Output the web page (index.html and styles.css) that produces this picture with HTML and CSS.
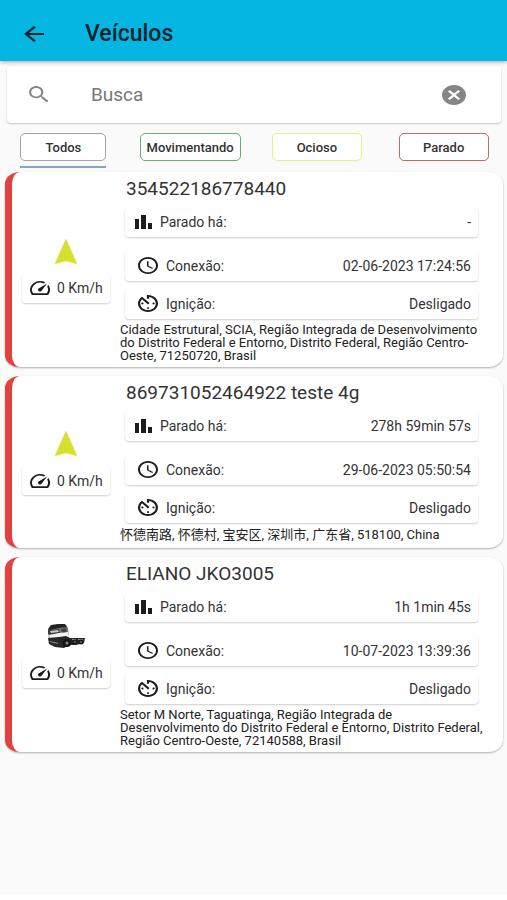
FILE: index.html
```html
<!DOCTYPE html>
<html lang="pt-BR">
<head>
<meta charset="utf-8">
<meta name="viewport" content="width=device-width, initial-scale=1">
<title>Veículos</title>
<link rel="stylesheet" href="styles.css">
</head>
<body>
<svg class="sprite" aria-hidden="true">
  <symbol id="speed" viewBox="2 4 20 16" preserveAspectRatio="none"><path d="M20.38 8.57l-1.23 1.85a8 8 0 0 1-.22 7.58H5.07A8 8 0 0 1 15.58 6.85l1.85-1.23A10 10 0 0 0 3.35 19a2 2 0 0 0 1.72 1h13.85a2 2 0 0 0 1.74-1 10 10 0 0 0-.27-10.44zm-9.79 6.84a2 2 0 0 0 2.83 0l5.66-8.49-8.49 5.66a2 2 0 0 0 0 2.83z"/></symbol>
  <symbol id="bars" viewBox="0 0 17 14"><path d="M0 4h4v10H0zM6 0h5v14H6zM13 8h4v6h-4z"/></symbol>
  <symbol id="clock" viewBox="2 2 20 20" preserveAspectRatio="none"><path d="M11.990 2C6.470 2 2 6.480 2 12s4.470 10 9.990 10C17.520 22 22 17.520 22 12S17.520 2 11.990 2zM12 20c-4.420 0-8-3.580-8-8s3.580-8 8-8 8 3.580 8 8-3.580 8-8 8zm.5-13H11v6l5.250 3.150.75-1.230-4.500-2.670z"/></symbol>
  <symbol id="ignition" viewBox="3 3 18 18" preserveAspectRatio="none"><path d="M11 17c0 .55.45 1 1 1s1-.45 1-1-.45-1-1-1-1 .45-1 1zm0-14v4h2V5.080c3.390.49 6 3.390 6 6.920 0 3.870-3.130 7-7 7s-7-3.130-7-7c0-1.680.59-3.220 1.580-4.420L12 13l1.410-1.410-6.800-6.800v.02C4.420 6.450 3 9.050 3 12c0 4.970 4.020 9 9 9 4.970 0 9-4.030 9-9s-4.030-9-9-9h-1zm7 9c0-.55-.45-1-1-1s-1 .45-1 1 .45 1 1 1 1-.45 1-1zM6 12c0 .55.45 1 1 1s1-.45 1-1-.45-1-1-1-1 .45-1 1z"/></symbol>
  <symbol id="arrow" viewBox="0 0 26 28" preserveAspectRatio="none"><path d="M13 1l12 26L13 23.500 1 27z"/></symbol>
</svg>

<header class="appbar">
  <button class="back" type="button" aria-label="Voltar">
    <svg viewBox="4 4 16 16" preserveAspectRatio="none"><path d="M20 11H7.830l5.590-5.590L12 4l-8 8 8 8 1.410-1.410L7.830 13H20v-2z"/></svg>
  </button>
  <h1>Veículos</h1>
</header>

<main>
  <form class="search">
    <label for="q" aria-label="Busca"><svg class="lens" viewBox="3 3 18 18" preserveAspectRatio="none"><path d="M15.500 14h-.79l-.28-.27A6.470 6.470 0 0 0 16 9.500 6.500 6.500 0 1 0 9.500 16c1.610 0 3.090-.59 4.230-1.570l.27.28v.79l5 4.990L20.490 19l-4.990-5zm-6 0C7.010 14 5 11.990 5 9.500S7.010 5 9.500 5 14 7.010 14 9.500 11.990 14 9.500 14z"/></svg></label>
    <input id="q" type="text" placeholder="Busca">
    <button class="clear" type="reset" aria-label="Limpar"><svg viewBox="2 2 20 20" preserveAspectRatio="none"><path d="M12 2C6.470 2 2 6.470 2 12s4.470 10 10 10 10-4.470 10-10S17.530 2 12 2zm5 13.590L15.590 17 12 13.410 8.410 17 7 15.590 10.590 12 7 8.410 8.410 7 12 10.590 15.590 7 17 8.410 13.410 12 17 15.590z"/></svg></button>
  </form>

  <nav class="filters">
    <div class="tab tab-active"><button class="chip chip-all" type="button">Todos</button></div>
    <div class="tab"><button class="chip chip-moving" type="button">Movimentando</button></div>
    <div class="tab"><button class="chip chip-idle" type="button">Ocioso</button></div>
    <div class="tab"><button class="chip chip-stopped" type="button">Parado</button></div>
  </nav>

  <section class="list">
    <article class="card">
      <div class="side">
        <svg class="marker"><use href="#arrow"/></svg>
        <p class="speed"><svg><use href="#speed"/></svg>0 Km/h</p>
      </div>
      <div class="info">
        <h2>354522186778440</h2>
        <dl>
          <div class="row row-first"><dt><svg class="i-bars"><use href="#bars"/></svg>Parado há:</dt><dd>-</dd></div>
          <div class="row"><dt><svg class="i-round"><use href="#clock"/></svg>Conexão:</dt><dd>02-06-2023 17:24:56</dd></div>
          <div class="row"><dt><svg class="i-round"><use href="#ignition"/></svg>Ignição:</dt><dd>Desligado</dd></div>
        </dl>
        <p class="address">Cidade Estrutural, SCIA, Região Integrada de Desenvolvimento do Distrito Federal e Entorno, Distrito Federal, Região Centro-Oeste, 71250720, Brasil</p>
      </div>
    </article>

    <article class="card">
      <div class="side">
        <svg class="marker"><use href="#arrow"/></svg>
        <p class="speed"><svg><use href="#speed"/></svg>0 Km/h</p>
      </div>
      <div class="info">
        <h2>869731052464922 teste 4g</h2>
        <dl>
          <div class="row row-first"><dt><svg class="i-bars"><use href="#bars"/></svg>Parado há:</dt><dd>278h 59min 57s</dd></div>
          <div class="row"><dt><svg class="i-round"><use href="#clock"/></svg>Conexão:</dt><dd>29-06-2023 05:50:54</dd></div>
          <div class="row"><dt><svg class="i-round"><use href="#ignition"/></svg>Ignição:</dt><dd>Desligado</dd></div>
        </dl>
        <p class="address address-cjk">怀德南路, 怀德村, 宝安区, 深圳市, 广东省, 518100, China</p>
      </div>
    </article>

    <article class="card">
      <div class="side">
        <svg class="truck" viewBox="0 0 38 27">
          <path fill="#777" d="M1 7l3-4 6-1h9l2 3 1 11H2z"/>
          <path fill="#222" d="M1 6l3-4 7-1h7l2 3-8 1-9 2z"/>
          <path fill="#3a3a3a" d="M1 6l2 1 9-1 1 4-10 2-2-1z"/>
          <path fill="#c9c9c9" d="M3 8l8-1 1 2-8 1z"/>
          <path fill="#444" d="M14 6l5-1 1 5-5 1z"/>
          <path fill="#f2f2f2" d="M2 12l10-2 9-1 1 5-9 1-10 1z"/>
          <path fill="#272727" d="M1 15l11-1 7-1 4 2h15l-1 5-8 2h-7l-5 3-9-1-6-3z"/>
          <path fill="#8c8c8c" d="M3 18l8 2v1l-8-2zM25 16h4v1h-4zM31 16h5v1h-5z"/>
          <circle cx="20" cy="20" r="4" fill="#161616"/><circle cx="20" cy="20" r="1.500" fill="#8a8a8a"/>
          <circle cx="28" cy="19" r="2.500" fill="#1c1c1c"/><circle cx="28" cy="19" r="1" fill="#666"/>
          <circle cx="34" cy="19" r="2.500" fill="#1c1c1c"/><circle cx="34" cy="19" r="1" fill="#666"/>
        </svg>
        <p class="speed"><svg><use href="#speed"/></svg>0 Km/h</p>
      </div>
      <div class="info">
        <h2>ELIANO JKO3005</h2>
        <dl>
          <div class="row row-first"><dt><svg class="i-bars"><use href="#bars"/></svg>Parado há:</dt><dd>1h 1min 45s</dd></div>
          <div class="row"><dt><svg class="i-round"><use href="#clock"/></svg>Conexão:</dt><dd>10-07-2023 13:39:36</dd></div>
          <div class="row"><dt><svg class="i-round"><use href="#ignition"/></svg>Ignição:</dt><dd>Desligado</dd></div>
        </dl>
        <p class="address">Setor M Norte, Taguatinga, Região Integrada de Desenvolvimento do Distrito Federal e Entorno, Distrito Federal, Região Centro-Oeste, 72140588, Brasil</p>
      </div>
    </article>
  </section>
</main>
<footer class="navbar"></footer>
</body>
</html>
```
FILE: styles.css
```css
* { box-sizing: border-box; }

body {
  margin: 0;
  min-height: 100vh;
  display: flex;
  flex-direction: column;
  background: #fafafa;
  color: #333;
  font-family: Roboto, "Noto Sans CJK SC", sans-serif;
  font-size: 14px;
}

h1, h2, p, dl, dd { margin: 0; }
button { font: inherit; color: inherit; padding: 0; border: 0; background: none; }
svg { display: block; fill: currentColor; }
.sprite { position: absolute; width: 0; height: 0; }

.appbar {
  display: flex;
  align-items: center;
  gap: 41px;
  height: 61px;
  padding: 6px 24px 0;
  background: #04b6e1;
  color: #08232c;
  box-shadow: 0 1px 4px rgba(0, 0, 0, .35);
}
.back svg { width: 20px; height: 16px; }
.appbar h1 { font-size: 23px; font-weight: 500; line-height: 24px; }

main { flex: 1; }

.search {
  display: flex;
  align-items: center;
  height: 57px;
  margin: 5px 6px 0 7px;
  padding: 0 35px 0 22px;
  background: #fff;
  border-radius: 4px;
  box-shadow: 0 1px 2px rgba(0, 0, 0, .22);
  color: #858585;
}
.lens { width: 20px; height: 17px; }
.search input {
  flex: 1;
  min-width: 0;
  margin: 0 20px 0 42px;
  padding: 0;
  border: 0;
  outline: 0;
  background: none;
  font: 19px/24px Roboto, sans-serif;
  color: #333;
}
.search input::placeholder { color: #777; opacity: 1; }
.clear svg { width: 24px; height: 20px; }

.filters {
  display: grid;
  grid-template-columns: repeat(4, 1fr);
  justify-items: center;
  margin-top: 10px;
}
.tab { height: 35px; border-bottom: 2px solid transparent; }
.tab-active { border-bottom-color: #86a5cb; }
.chip {
  display: block;
  width: 90px;
  height: 28px;
  border: 1px solid;
  border-radius: 5px;
  background: #fff;
  font-size: 13px;
  font-weight: 500;
}
.chip-all { width: 86px; border-color: #a3a3a8; }
.chip-moving { width: 101px; border-color: #6fa97c; }
.chip-idle { border-color: #e6f283; }
.chip-stopped { border-color: #bb6b6d; }

.list {
  display: flex;
  flex-direction: column;
  gap: 9px;
  padding: 4px 4px 9px 5px;
}
.card {
  display: flex;
  padding: 6px 19px 5px 10px;
  background: #fff;
  border-left: 7px solid #e2423d;
  border-radius: 15px / 12px;
  box-shadow: 0 1px 2px rgba(0, 0, 0, .3);
}
.side {
  display: flex;
  flex-direction: column;
  align-items: center;
  justify-content: center;
  gap: 9px;
  width: 88px;
}
.marker { width: 24px; height: 27px; color: #d3e02f; filter: drop-shadow(0 0 1px #dfe889); }
.truck { width: 38px; height: 27px; }
.speed {
  display: flex;
  align-items: center;
  gap: 7px;
  width: 100%;
  height: 29px;
  padding-left: 8px;
  border-radius: 4px;
  box-shadow: 0 1px 2px rgba(0, 0, 0, .2);
}
.speed svg { width: 20px; height: 14px; }
.row svg, .speed svg { color: #1c1c1c; }

.info { flex: 1; min-width: 0; padding-left: 10px; }
.info h2 { padding-left: 6px; font-size: 19px; font-weight: 400; line-height: 22px; }
.info dl {
  display: flex;
  flex-direction: column;
  gap: 9px;
  margin: 8px 6px 4px 5px;
}
.row {
  display: flex;
  align-items: center;
  justify-content: space-between;
  height: 29px;
  padding: 0 7px 2px 13px;
  border-radius: 4px;
  box-shadow: 0 1px 2px rgba(0, 0, 0, .2);
}
.row-first { margin-bottom: 6px; padding-left: 10px; }
.row dt { display: flex; align-items: center; gap: 8px; }
.i-bars { width: 17px; height: 14px; }
.i-round { width: 20px; height: 17px; }

.address { font-size: 13px; line-height: 13px; color: #222; }
.address-cjk { line-height: 16px; }

.navbar { height: 6px; background: #fff; }
```
